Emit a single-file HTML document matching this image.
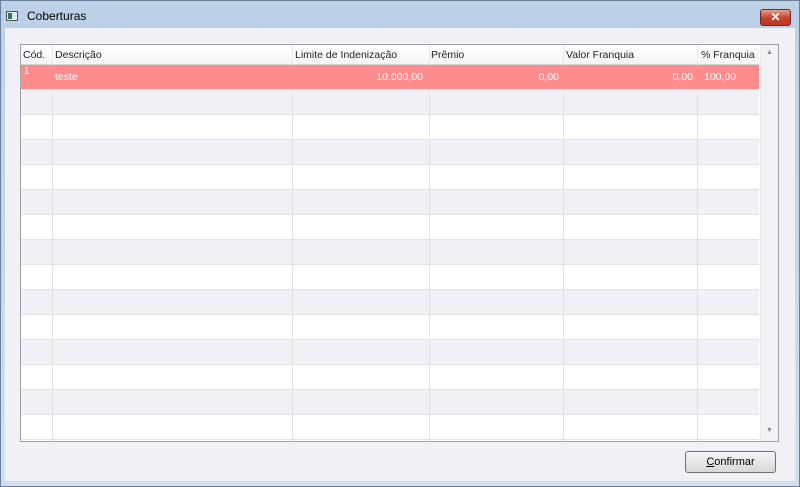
<!DOCTYPE html>
<html><head><style>
*{margin:0;padding:0;box-sizing:border-box}
body{width:800px;height:487px;overflow:hidden;background:#c9daee;font-family:"Liberation Sans",sans-serif;font-size:11px;color:#000;position:relative}
.frame{position:absolute;left:0;top:0;width:800px;height:487px;background:linear-gradient(#bcd0e8,#cfdff0);border:1px solid #6b7f99}
.title{position:absolute;left:27px;top:9px;font-size:12px;color:#000}
.icon{position:absolute;left:6px;top:11px;width:12px;height:10px;border:1px solid #555;background:#dfe8ee}
.icon:before{content:"";position:absolute;left:1px;top:1px;width:4px;height:6px;background:#2a7a5a}
.close{position:absolute;left:760px;top:9px;width:31px;height:17px;border:1px solid #6e2a2a;border-radius:3px;background:linear-gradient(#e8a08e,#c8452f 50%,#b83a22);color:#fff;font-size:12px;font-weight:bold;text-align:center;line-height:15px}
.client{position:absolute;left:5px;top:28px;width:790px;height:453px;background:#f0f0f6}
.grid{position:absolute;left:20px;top:44px;width:759px;height:398px;border:1px solid #a0a0a8;background:#fff;overflow:hidden}
.hdr{position:absolute;left:0;top:0;height:20px;width:740px;background:linear-gradient(#fff,#f4f5f7);border-bottom:1px solid #d5d5d8}
.hdr span{position:absolute;top:4px;font-size:10.5px;color:#222}
.row{position:absolute;left:0;width:738px;height:25px;border-bottom:1px solid #e2e2e6}
.vl{position:absolute;top:0;width:1px;height:398px;background:#e0e0e4}
.sb{position:absolute;left:739px;top:0;width:18px;height:396px;background:#f2f2f4;border-left:1px solid #e8e8ea}
.pink{background:#ff8c8c;color:#fff}
.cell{position:absolute;top:6px;font-size:10.5px}
.btn{position:absolute;left:685px;top:451px;width:91px;height:22px;border:1px solid #707070;border-radius:3px;background:linear-gradient(#f4f4f4,#e6e6e6 50%,#d8d8d8);text-align:center;line-height:20px;font-size:11px}
</style></head><body>
<div class="frame"></div>
<div class="icon"></div>
<div class="title">Coberturas</div>
<div class="close">✕</div>
<div class="client"></div>
<div class="grid">
<div class="row pink" style="top:20px;height:25px">
<span class="cell" style="left:3px;top:1px;font-size:10px">1</span>
<span class="cell" style="left:34px">teste</span>
<span class="cell" style="right:336px">10.000,00</span>
<span class="cell" style="right:200px">0,00</span>
<span class="cell" style="right:66px">0,00</span>
<span class="cell" style="left:683px">100,00</span>
</div>
<div class="row" style="top:45px;background:#f0f0f6"></div>
<div class="row" style="top:70px"></div>
<div class="row" style="top:95px;background:#f0f0f6"></div>
<div class="row" style="top:120px"></div>
<div class="row" style="top:145px;background:#f0f0f6"></div>
<div class="row" style="top:170px"></div>
<div class="row" style="top:195px;background:#f0f0f6"></div>
<div class="row" style="top:220px"></div>
<div class="row" style="top:245px;background:#f0f0f6"></div>
<div class="row" style="top:270px"></div>
<div class="row" style="top:295px;background:#f0f0f6"></div>
<div class="row" style="top:320px"></div>
<div class="row" style="top:345px;background:#f0f0f6"></div>
<div class="row" style="top:370px"></div>
<div class="vl" style="left:31px;top:45px"></div>
<div class="vl" style="left:271px;top:45px"></div>
<div class="vl" style="left:408px;top:45px"></div>
<div class="vl" style="left:542px;top:45px"></div>
<div class="vl" style="left:676px;top:45px"></div>
<div class="hdr">
<span style="left:2px">Cód.</span>
<span style="left:34px">Descrição</span>
<span style="left:274px">Limite de Indenização</span>
<span style="left:410px">Prêmio</span>
<span style="left:545px">Valor Franquia</span>
<span style="left:680px">% Franquia</span>
<div class="vl" style="left:31px;height:20px;background:#e8e8ea"></div>
<div class="vl" style="left:271px;height:20px;background:#e8e8ea"></div>
<div class="vl" style="left:408px;height:20px;background:#e8e8ea"></div>
<div class="vl" style="left:542px;height:20px;background:#e8e8ea"></div>
<div class="vl" style="left:676px;height:20px;background:#e8e8ea"></div>
</div>
<div class="sb"><span style="position:absolute;left:5px;top:4px;font-size:7px;color:#888">▲</span><span style="position:absolute;left:5px;top:382px;font-size:7px;color:#888">▼</span></div>
</div>
<div class="btn"><u>C</u>onfirmar</div>
</body></html>
